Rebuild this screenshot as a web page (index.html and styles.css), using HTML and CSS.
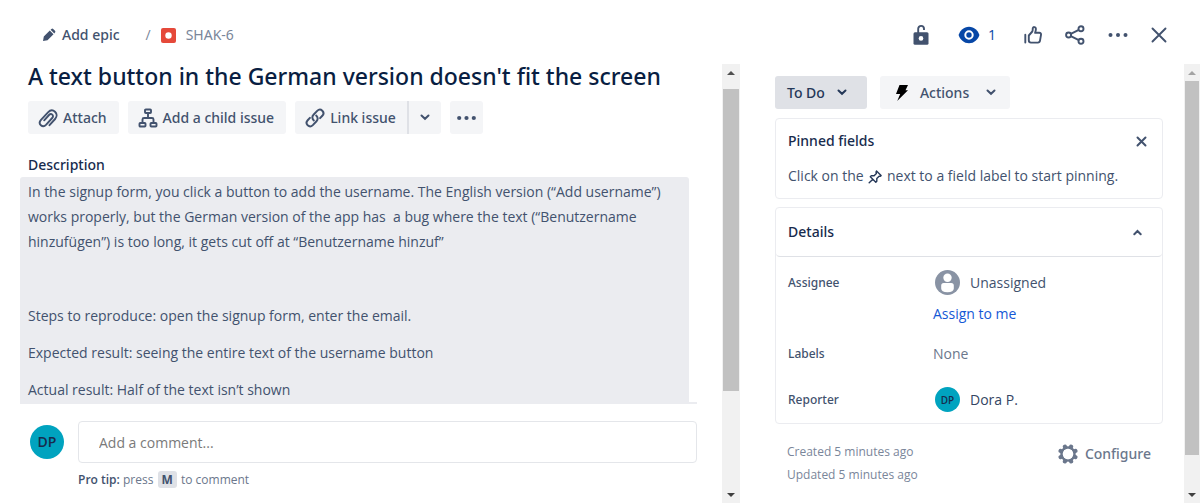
FILE: index.html
```html
<!DOCTYPE html>
<html lang="en">
<head>
<meta charset="utf-8">
<meta name="viewport" content="width=device-width, initial-scale=1">
<title>SHAK-6</title>
<link rel="stylesheet" href="styles.css">
</head>
<body>
<div class="page">
  <header class="topbar">
    <nav class="crumbs">
      <button class="bare epic" type="button">
        <svg width="14" height="14" viewBox="0 0 14 14" fill="currentColor"><path d="M1 13l.8-4.500L7.800 2.500l3.700 3.700L5.500 12.200z M8.600 1.700l.8-.7a1.300 1.300 0 0 1 1.800 0l1.800 1.800a1.300 1.300 0 0 1 0 1.800l-.7.800z"/></svg>
        Add epic
      </button>
      <span class="slash">/</span>
      <a class="key" href="#">
        <svg width="15" height="15" viewBox="0 0 15 15"><rect width="15" height="15" rx="2" fill="#e5493a"/><circle cx="7.500" cy="7.500" r="3.200" fill="#fff"/></svg>
        SHAK-6
      </a>
    </nav>
    <div class="tools">
      <button class="bare" type="button" aria-label="Lock"><svg width="16" height="22" viewBox="0 0 16 22"><path d="M5.200 9V4.800a2.900 2.900 0 0 1 5.800 0V6" fill="none" stroke="currentColor" stroke-width="1.900"/><rect x=".5" y="8.200" width="15" height="12.500" rx="1.500" fill="currentColor"/><circle cx="8" cy="14.400" r="2.300" fill="#fff"/></svg></button>
      <button class="bare watch" type="button"><svg width="22" height="18" viewBox="0 0 22 18"><path d="M11 .7C5.800.7 2 4.500.6 9c1.400 4.500 5.200 8.300 10.400 8.300S20 13.500 21.400 9C20 4.500 16.200.7 11 .7z" fill="#0747a6"/><circle cx="11" cy="9" r="3.700" fill="none" stroke="#fff" stroke-width="2"/></svg>1</button>
      <button class="bare" type="button" aria-label="Like"><svg width="18" height="18" viewBox="0 0 18 18" fill="none" stroke="currentColor" stroke-width="1.900" stroke-linejoin="round" stroke-linecap="round"><path d="M1.300 8.800v7.700M4.800 9.500L8.300 5.500c.5-.7.400-1.700.4-2.700 0-2.400 3.200-2.300 3.200.3 0 1.400-.4 2.600-.8 3.700h4.200c1.300 0 1.900 1 1.700 2l-1 5.900c-.2 1.200-.9 1.900-2.100 1.900H7c-1.600 0-2.200-.9-2.200-2.300z"/></svg></button>
      <button class="bare" type="button" aria-label="Share"><svg width="20" height="20" viewBox="0 0 20 20" fill="none" stroke="currentColor" stroke-width="1.900"><circle cx="3.600" cy="10" r="2.500"/><circle cx="16" cy="3.700" r="2.500"/><circle cx="16" cy="16.300" r="2.500"/><path d="M5.800 8.900l8-4.100M5.800 11.100l8 4.100"/></svg></button>
      <button class="bare" type="button" aria-label="More"><svg width="20" height="6" viewBox="0 0 20 6" fill="currentColor"><circle cx="2.500" cy="3" r="2"/><circle cx="10" cy="3" r="2"/><circle cx="17.500" cy="3" r="2"/></svg></button>
      <button class="bare" type="button" aria-label="Close"><svg width="16" height="16" viewBox="0 0 16 16" stroke="currentColor" stroke-width="1.900" stroke-linecap="round"><path d="M1.500 1.500l13 13M14.500 1.500l-13 13"/></svg></button>
    </div>
  </header>

  <div class="columns">
    <main class="issue">
      <div class="issue-body">
        <h1>A text button in the German version doesn't fit the screen</h1>
        <div class="actions">
          <button class="btn attach" type="button"><svg width="20" height="20" viewBox="0 0 20 20" fill="none" stroke="currentColor" stroke-width="1.900" stroke-linecap="round"><path d="M11.500 17.200l5.600-6.200c2.200-2.500 1.800-5.500-.1-7.300-2-1.800-4.800-1.700-7 .6L3 11.800c-1.700 1.900-1.500 4.100-.1 5.400 1.400 1.300 3.600 1.300 5.300-.5l6-6.700c1.100-1.200 1-2.600.1-3.400-.9-.8-2.200-.8-3.300.4L6.200 12.300"/></svg>Attach</button>
          <button class="btn child" type="button"><svg width="20" height="20" viewBox="0 0 20 20" fill="none" stroke="currentColor" stroke-width="1.900" stroke-linejoin="round"><rect x="7" y="1.500" width="6" height="3.500" rx=".8"/><rect x="1.500" y="15" width="6" height="3.500" rx=".8"/><rect x="12.500" y="15" width="6" height="3.500" rx=".8"/><path d="M10 5v5M4.500 15v-3.500q0-1.500 1.500-1.500h8q1.500 0 1.500 1.500V15"/></svg>Add a child issue</button>
          <div class="split">
            <button class="btn link" type="button"><svg width="20" height="20" viewBox="0 0 20 20" fill="none" stroke="currentColor" stroke-width="2" stroke-linecap="round"><path d="M8.800 12.400C6.900 10.700 6.900 8.400 8.500 6.800l3.700-3.900c1.600-1.600 3.700-1.500 5.100-.2 1.400 1.400 1.500 3.500 0 5.100l-2.200 2.300"/><path d="M11.200 7.600c1.900 1.700 1.900 4 .3 5.600l-3.700 3.900c-1.600 1.600-3.700 1.500-5.100.2-1.400-1.400-1.500-3.500 0-5.100L4.900 9.900"/></svg>Link issue</button>
            <button class="btn drop" type="button" aria-label="Link options"><svg width="10" height="7" viewBox="0 0 10 7" fill="none" stroke="currentColor" stroke-width="2" stroke-linecap="round"><path d="M1.500 1.500L5 4.800l3.500-3.300"/></svg></button>
          </div>
          <button class="btn more" type="button" aria-label="More actions"><svg width="19" height="6" viewBox="0 0 19 6" fill="currentColor"><circle cx="2.200" cy="3" r="2.100"/><circle cx="9.500" cy="3" r="2.100"/><circle cx="16.800" cy="3" r="2.100"/></svg></button>
        </div>
        <h2>Description</h2>
        <div class="desc-wrap">
          <div class="desc">
            <p>In the signup form, you click a button to add the username. The English version (“Add username”)<br>works properly, but the German version of the app has&nbsp; a bug where the text (“Benutzername<br>hinzufügen”) is too long, it gets cut off at “Benutzername hinzuf”</p>
            <p>&nbsp;</p>
            <p>Steps to reproduce: open the signup form, enter the email.</p>
            <p>Expected result: seeing the entire text of the username button</p>
            <p>Actual result: Half of the text isn’t shown</p>
          </div>
        </div>
        <div class="comment">
          <span class="avatar">DP</span>
          <div class="comment-main">
            <input class="comment-box" type="text" placeholder="Add a comment..." aria-label="Add a comment">
            <p class="tip"><b>Pro tip:</b> press <kbd>M</kbd> to comment</p>
          </div>
        </div>
      </div>
      <div class="scroll scroll-main">
        <svg width="8" height="4" viewBox="0 0 8 4"><path d="M0 4l4-4 4 4z" fill="#505050"/></svg>
        <div class="thumb"></div><div class="track"></div>
        <svg width="8" height="4" viewBox="0 0 8 4"><path d="M0 0l4 4 4-4z" fill="#404040"/></svg>
      </div>
    </main>

    <aside class="side">
      <div class="side-body">
        <div class="status-row">
          <button class="btn status" type="button">To Do <svg width="10" height="7" viewBox="0 0 10 7" fill="none" stroke="currentColor" stroke-width="2" stroke-linecap="round"><path d="M1.500 1.500L5 4.800l3.500-3.300"/></svg></button>
          <button class="btn automate" type="button"><svg width="12" height="16" viewBox="0 0 12 16"><path d="M3.500 0H12L9.500 5.200H12L1.200 16l3-7H0z" fill="#000"/></svg><span>Actions</span><svg width="10" height="7" viewBox="0 0 10 7" fill="none" stroke="currentColor" stroke-width="2" stroke-linecap="round"><path d="M1.500 1.500L5 4.800l3.500-3.300"/></svg></button>
        </div>
        <section class="card pinned">
          <div class="card-head"><h3>Pinned fields</h3><button class="bare" type="button" aria-label="Dismiss"><svg width="11" height="11" viewBox="0 0 11 11" stroke="currentColor" stroke-width="2" stroke-linecap="round"><path d="M1.500 1.500l8 8M9.500 1.500l-8 8"/></svg></button></div>
          <p>Click on the <svg class="pin" width="14" height="14" viewBox="0 0 14 14" fill="none" stroke="currentColor" stroke-width="1.400" stroke-linejoin="round" stroke-linecap="round"><path d="M8.500 1l4.600 4.600-1 .8-1-.2-2.300 2.300v2.800l-1 1-5.500-5.500 1-1h2.800L8.400 3.500 8 2zM4.600 9.400L1.200 12.800"/></svg> next to a field label to start pinning.</p>
        </section>
        <section class="card details">
          <div class="details-head"><h3>Details</h3><button class="bare" type="button" aria-label="Collapse"><svg width="9" height="7" viewBox="0 0 9 7" fill="none" stroke="currentColor" stroke-width="2" stroke-linecap="round"><path d="M1.300 5.300L4.500 2l3.200 3.300"/></svg></button></div>
          <dl>
            <dt>Assignee</dt>
            <dd><span class="person"><svg width="25" height="25" viewBox="0 0 25 25"><circle cx="12.500" cy="12.500" r="12.500" fill="#8993a4"/><circle cx="12.500" cy="7.800" r="4.200" fill="#fff"/><path d="M6.200 15.500q0-2.500 2.500-2.500h7.600q2.500 0 2.500 2.500v3q0 3.700-6.300 3.700t-6.300-3.700z" fill="#fff"/></svg>Unassigned</span><a href="#">Assign to me</a></dd>
            <dt>Labels</dt>
            <dd class="none">None</dd>
            <dt>Reporter</dt>
            <dd><span class="person dark"><span class="avatar small">DP</span>Dora P.</span></dd>
          </dl>
        </section>
        <footer class="meta">
          <div class="dates"><p>Created 5 minutes ago</p><p>Updated 5 minutes ago</p></div>
          <button class="bare configure" type="button"><svg width="20" height="20" viewBox="0 0 20 20" fill="none" stroke="currentColor"><circle cx="10" cy="10" r="6.500" stroke-width="2.400"/><g stroke-width="4.200" stroke-linecap="round"><path d="M6.900 2.600l.4.900M13.100 2.600l-.4.900M6.900 17.400l.4-.9M13.100 17.400l-.4-.9M2.600 6.900l.9.400M2.600 13.100l.9-.4M17.400 6.900l-.9.400M17.400 13.100l-.9-.4"/></g><circle cx="10" cy="10" r="5.200" fill="#fff" stroke="none"/></svg>Configure</button>
        </footer>
      </div>
      <div class="scroll scroll-side">
        <svg width="8" height="4" viewBox="0 0 8 4"><path d="M0 4l4-4 4 4z" fill="#a3a3a3"/></svg>
        <div class="thumb"></div><div class="track"></div>
        <svg width="8" height="4" viewBox="0 0 8 4"><path d="M0 0l4 4 4-4z" fill="#404040"/></svg>
      </div>
    </aside>
  </div>
</div>
</body>
</html>
```
FILE: styles.css
```css
* { box-sizing: border-box; }
body {
  margin: 0;
  background: #fff;
  color: #42526e;
  font: 14px/20px "Open Sans", "Noto Sans", sans-serif;
}
h1, h2, h3, p, dl, dd { margin: 0; }
svg { flex: none; }
button { font: inherit; color: inherit; cursor: pointer; }
a { color: #0052cc; text-decoration: none; }

/* Medium-weight text */
h1, h2, h3, dt, .epic, .key, .btn, .configure { font-family: "Noto Sans", sans-serif; }

.page { display: flex; flex-direction: column; min-height: 100vh; }
.bare { display: flex; align-items: center; padding: 0; border: 0; background: none; }

/* Top bar */
.topbar { display: flex; justify-content: space-between; align-items: center; height: 64px; padding: 6px 33px 0 42px; }
.crumbs { display: flex; align-items: center; }
.epic { gap: 6px; font-weight: 500; }
.slash { margin: 0 10px 0 26px; color: #7a869a; }
.key { display: flex; align-items: center; gap: 10px; color: #7a869a; }
.tools { display: flex; align-items: center; gap: 23px; }
.watch { gap: 8px; margin: 0 5px 0 6px; color: #0747a6; }

/* Columns */
.columns { flex: 1; display: grid; grid-template-columns: 37fr 23fr; }
.issue, .side { display: flex; min-width: 0; }
.issue-body { flex: 1; min-width: 0; padding: 0 25px 10px 20px; }
.side-body { flex: 1; min-width: 0; padding: 12px 21px 0 35px; }

h1 { margin-left: 8px; color: #091e42; font-size: 23px; line-height: 24px; font-weight: 500; white-space: nowrap; }
.actions { display: flex; gap: 9px; margin: 13px 0 0 8px; }
.btn { display: flex; align-items: center; height: 33px; border: 0; border-radius: 3px; background: #f4f5f7; font-weight: 500; white-space: nowrap; }
.attach, .child, .link { gap: 5px; padding: 0 12px 0 10px; }
.split { display: flex; }
.link { padding-right: 11px; border-radius: 3px 0 0 3px; }
.drop { padding: 0 11px; border-left: 2px solid #dfe1e6; border-radius: 0 3px 3px 0; }
.more { padding: 0 7px; }
h2 { margin: 21px 0 0 8px; color: #172b4d; font-size: 14px; line-height: 20px; font-weight: 500; }
.desc-wrap { margin-top: 2px; border-bottom: 2px solid #ebecf0; }
.desc { display: flex; flex-direction: column; gap: 12px; margin-right: 8px; padding: 2px 8px 0; border-radius: 3px 3px 0 0; background: #ebecf0; line-height: 25px; white-space: nowrap; }

.comment { display: flex; gap: 14px; margin: 17px 0 0 10px; }
.avatar { flex: none; display: flex; align-items: center; justify-content: center; width: 34px; height: 34px; margin-top: 4px; border-radius: 50%; background: #00a3bf; color: #172b4d; font-weight: 600; }
.comment-main { flex: 1; min-width: 0; }
.comment-box { display: block; width: 100%; height: 42px; padding: 0 20px; border: 1px solid #e4e6ea; border-radius: 4px; background: #fff; color: #42526e; font: inherit; }
.comment-box::placeholder { color: #7a7a7a; opacity: 1; }
.tip { margin-top: 7px; color: #6b778c; font-size: 12px; line-height: 20px; }
.tip b { color: #42526e; font-weight: 600; }
kbd { display: inline-block; margin: 0 1px; padding: 0 4px; border-radius: 3px; background: #dfe1e6; color: #42526e; font: inherit; font-weight: 700; line-height: 17px; }

/* Scrollbars */
.scroll { display: flex; flex-direction: column; align-items: center; background: #f1f1f1; }
.scroll .thumb { align-self: stretch; margin: 0 1px; background: #c1c1c1; }
.scroll-main { width: 18px; padding: 7px 0 6px; }
.scroll-main .thumb { flex: 302; margin-top: 14px; }
.scroll-main .track { flex: 102; }
.scroll-side { width: 16px; padding: 7px 0 6px; }
.scroll-side .thumb { flex: 374; margin-top: 6px; }
.scroll-side .track { flex: 38; }

/* Side panel */
.status-row { display: flex; gap: 13px; }
.status { gap: 12px; padding: 0 20px 0 12px; background: #dfe1e6; color: #253858; }
.automate { padding: 0 14px 0 16px; }
.automate span { margin: 0 17px 0 12px; }
.card { border: 1px solid #ebecf0; border-radius: 4px; }
h3 { color: #172b4d; font-size: 14px; line-height: 20px; font-weight: 500; }
.pinned { margin-top: 9px; padding: 12px 15px 12px 12px; }
.card-head { display: flex; justify-content: space-between; align-items: center; }
.pinned p { margin-top: 15px; white-space: nowrap; }
.pin { margin: 0 1px; color: #253858; vertical-align: -3px; }
.details { margin-top: 8px; }
.details-head { display: flex; justify-content: space-between; align-items: center; height: 49px; padding: 0 20px 0 12px; border-bottom: 1px solid #dfe1e6; border-radius: 0 0 4px 4px; }
dl { display: grid; grid-template-columns: 145px 1fr; row-gap: 17px; padding: 13px 12px 11px; }
dt { padding-top: 3px; font-size: 12px; font-weight: 500; }
dd a { display: block; margin-top: 9px; color: #1558d6; }
.person { display: flex; align-items: center; gap: 10px; padding-left: 2px; }
.dark { color: #344563; }
.none { padding: 3px 0 6px; color: #6b778c; }
.avatar.small { width: 25px; height: 25px; margin: 0; font-size: 10px; }
.meta { display: flex; justify-content: space-between; margin-top: 18px; padding: 0 12px; color: #7a869a; font-size: 12px; }
.dates { display: grid; gap: 3px; }
.configure { gap: 7px; align-self: flex-start; margin-top: 2px; color: #6b778c; font-size: 14px; font-weight: 500; }
```
